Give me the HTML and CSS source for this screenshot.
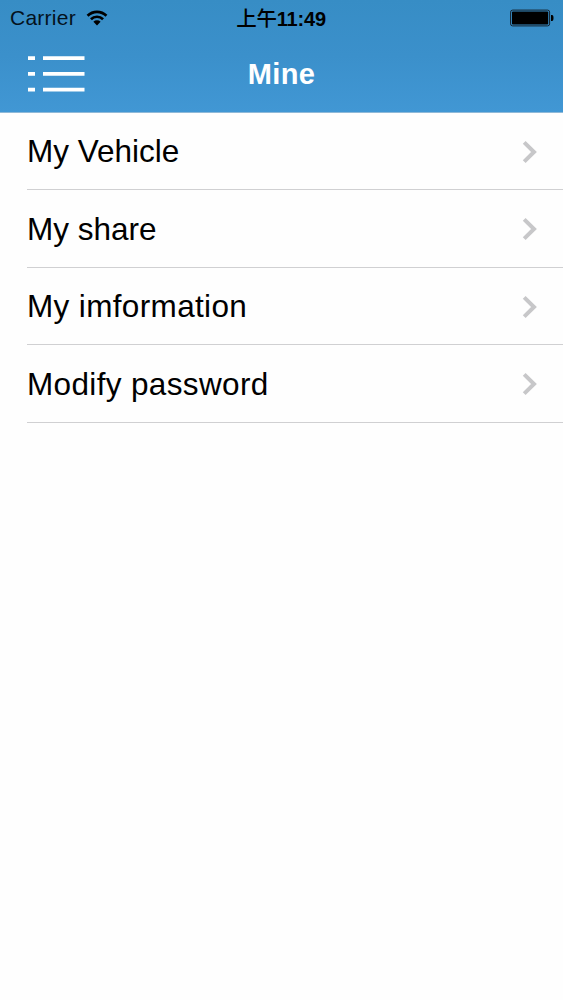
FILE: index.html
```html
<!DOCTYPE html>
<html lang="en">
<head>
    <meta charset="UTF-8" />
    <meta name="viewport" content="width=device-width, initial-scale=1.0"/>
    <title>Mine</title>
    <link rel="stylesheet" href="styles.css">
</head>
<body>

    <header class="header">
        <div class="status-bar">
            <div class="carrier">
                <span class="carrier-name">Carrier</span>
                <svg class="wifi" width="22" height="16" viewBox="0 0 22 16">
                    <path d="M0.6 4.8 A14.8 14.8 0 0 1 21.4 4.8 L19.5 6.8 A12 12 0 0 0 2.5 6.8 Z"/>
                    <path d="M4 8.3 A10 10 0 0 1 18 8.3 L16.1 10.2 A7.2 7.2 0 0 0 5.9 10.2 Z"/>
                    <path d="M7.4 11.7 A5.2 5.2 0 0 1 14.6 11.7 L11 15.4 Z"/>
                </svg>
            </div>
            <div class="clock"><span class="period">上午</span>11:49</div>
            <svg class="battery" width="44" height="18" viewBox="0 0 44 18">
                <rect x="0.6" y="1.1" width="39" height="15.8" rx="2" fill="none" stroke="#14202b"/>
                <rect x="2" y="2.5" width="36.2" height="13" rx="0.8"/>
                <path d="M41 6 H42 A1.5 3 0 0 1 42 12 H41 Z"/>
            </svg>
        </div>
        <div class="nav-bar">
            <svg class="menu-icon" width="58" height="38" viewBox="0 0 58 38">
                <path d="M1 3.2H8M16 3.2H57.5M1 18.8H8M16 18.8H57.5M1 34.6H8M16 34.6H57.5"/>
            </svg>
            <div class="title">Mine</div>
        </div>
    </header>

    <ul class="menu-list">
        <li class="menu-item">
            <span class="label">My Vehicle</span>
            <svg class="arrow" width="16" height="24" viewBox="0 0 16 24"><path d="M2.2 2.4L12 12L2.2 21.6"/></svg>
        </li>
        <li class="menu-item">
            <span class="label">My share</span>
            <svg class="arrow" width="16" height="24" viewBox="0 0 16 24"><path d="M2.2 2.4L12 12L2.2 21.6"/></svg>
        </li>
        <li class="menu-item">
            <span class="label wide">My imformation</span>
            <svg class="arrow" width="16" height="24" viewBox="0 0 16 24"><path d="M2.2 2.4L12 12L2.2 21.6"/></svg>
        </li>
        <li class="menu-item">
            <span class="label wide">Modify password</span>
            <svg class="arrow" width="16" height="24" viewBox="0 0 16 24"><path d="M2.2 2.4L12 12L2.2 21.6"/></svg>
        </li>
    </ul>

</body>
</html>
```
FILE: styles.css
```css
body {
    margin: 0;
    font-family: 'Liberation Sans', 'Noto Sans CJK SC', sans-serif;
    background: #fefefe;
    color: #000;
    min-height: 100vh;
}

.header {
    height: 113px;
    box-sizing: border-box;
    background: linear-gradient(#378dc5, #3b90cb 50%, #4197d4);
    border-bottom: 1px solid #8fb9d8;
}

.status-bar {
    display: grid;
    grid-template-columns: 1fr auto 1fr;
    grid-template-rows: 36px;
    align-items: center;
    height: 36px;
    padding: 0 9px 0 10px;
    box-sizing: border-box;
}

.carrier {
    display: flex;
    align-items: center;
    gap: 10px;
    font-size: 21px;
    letter-spacing: 0.25px;
    color: #04121d;
}

.wifi {
    margin-top: -1px;
}

.clock {
    font-size: 20px;
    font-weight: bold;
    line-height: 34px;
    letter-spacing: -0.2px;
    padding-right: 2px;
}

.period {
    font-family: 'Noto Sans CJK SC', sans-serif;
    font-weight: 500;
    font-size: 20.5px;
}

.battery {
    justify-self: end;
}

.nav-bar {
    display: grid;
    grid-template-columns: 1fr auto 1fr;
    align-items: center;
    height: 76px;
    padding: 0 27px;
}

.menu-icon path {
    stroke: #fff;
    stroke-width: 3.7;
}

.title {
    color: #fff;
    font-size: 29px;
    font-weight: bold;
    letter-spacing: 0.3px;
}

.menu-list {
    list-style: none;
    margin: -0.6px 0 0;
    padding: 0 0 0 27px;
}

.menu-item {
    display: flex;
    align-items: center;
    justify-content: space-between;
    height: 77.6px;
    padding: 2px 25px 0 0;
    box-sizing: border-box;
    border-bottom: 1px solid #d0d0d2;
}

.label {
    font-size: 31.5px;
}

.label.wide {
    letter-spacing: 0.35px;
}

.arrow path {
    fill: none;
    stroke: #c7c7c9;
    stroke-width: 4;
}
```
